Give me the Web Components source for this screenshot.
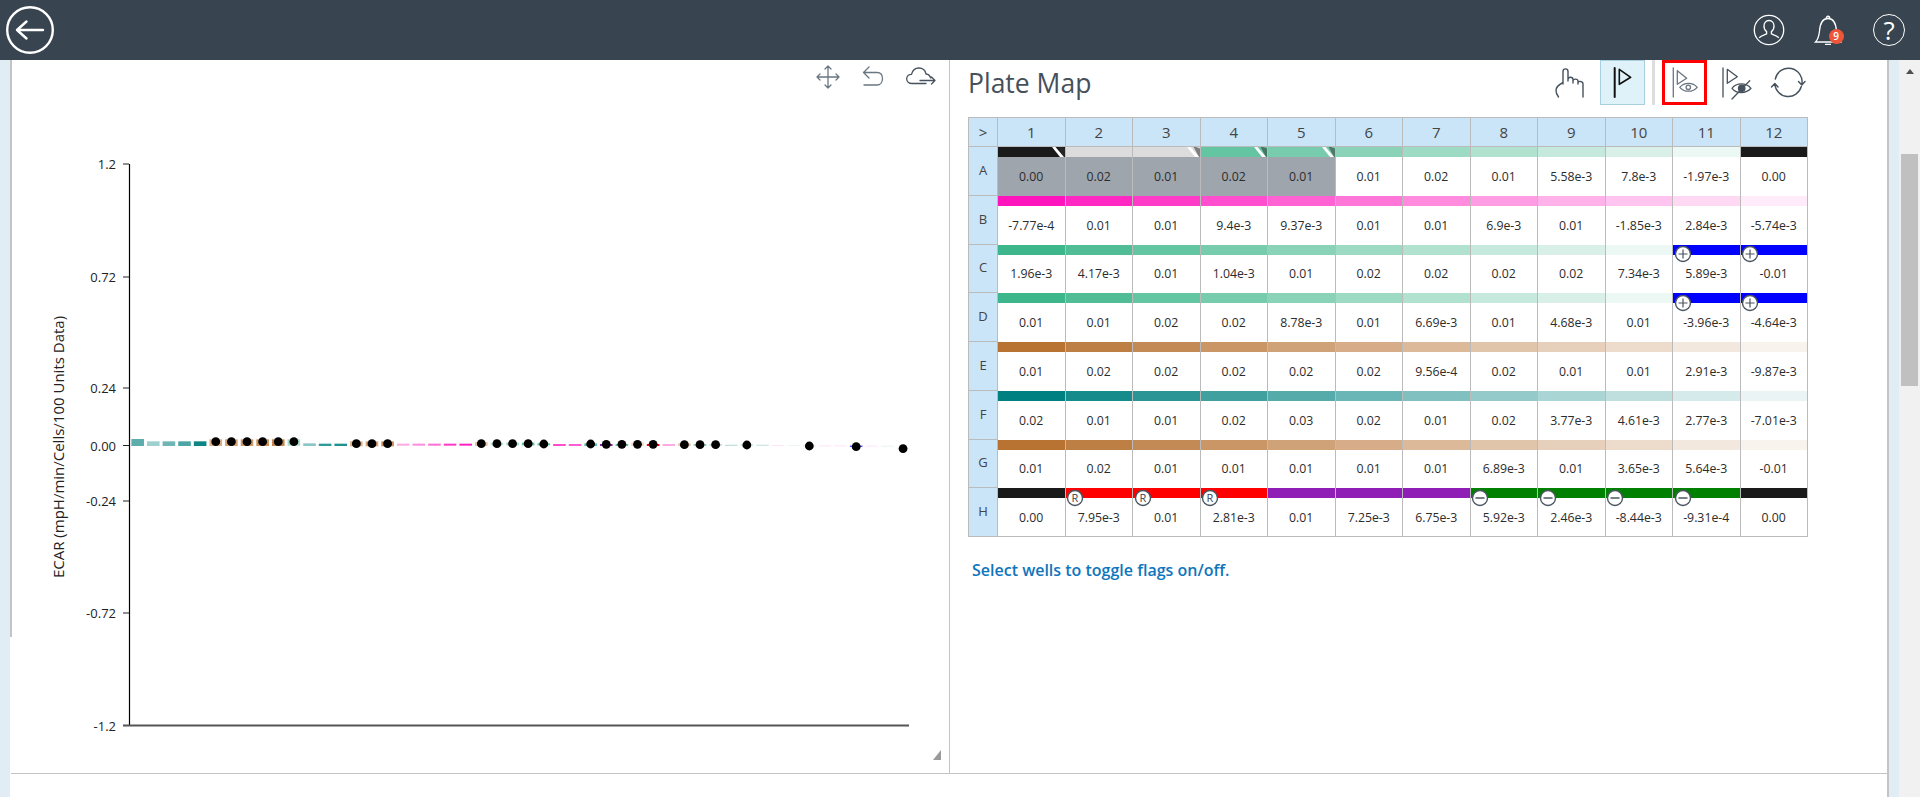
<!DOCTYPE html>
<html lang="en">
<head>
<meta charset="utf-8">
<title>Plate Map</title>
<style>
    html, body { margin: 0; height: 100%; overflow: hidden; background: #fff; }
    body { font-family: "Open Sans", "Liberation Sans", sans-serif; display: flex; flex-direction: column; }
</style>
</head>
<body>
<app-header></app-header>
<app-shell>
    <ecar-chart slot="left"></ecar-chart>
    <plate-panel slot="right"></plate-panel>
</app-shell>

<script>
// Barra superior com voltar, usuario, notificacoes e ajuda
class AppHeader extends HTMLElement {
    constructor() {
        super();
        this.attachShadow({ mode: 'open' });
        this.shadowRoot.innerHTML = `
            <style>
                :host { display: flex; flex: none; height: 60px; background: #38444f; align-items: center; justify-content: space-between; padding: 0 15px 0 6px; }
                .right { display: flex; align-items: center; gap: 27px; }
                svg { display: block; fill: none; stroke: #fff; }
                .bell { position: relative; width: 32px; height: 32px; margin-right: 2px; }
                .badge { position: absolute; left: 16.5px; top: 14.5px; width: 15px; height: 15px; border-radius: 50%; background: #f0553a; color: #fff; font-size: 10px; font-weight: 600; line-height: 15px; text-align: center; }
                .help { width: 32px; height: 32px; box-sizing: border-box; border: 1.3px solid #fff; border-radius: 50%; display: flex; align-items: center; justify-content: center; color: #fff; font-size: 26px; font-weight: 400; line-height: 1; }
            </style>
            <svg width="48" height="48" viewBox="0 0 48 48" stroke-width="2.4" stroke-linecap="round" stroke-linejoin="round">
                <circle cx="24" cy="24" r="22.8"/>
                <path d="M37 24H11M20.5 15.5L11 24L20.5 32.5"/>
            </svg>
            <div class="right">
                <svg width="32" height="32" viewBox="0 0 32 32" stroke-width="1.3">
                    <circle cx="16" cy="16" r="14.7"/>
                    <path d="M16 6.5c-3.2 0-5 2.6-5 5.5 0 2.4 1 4.5 2.6 5.6v2.3c-2.3 1-5.8 2-7.4 3.8M16 6.5c3.2 0 5 2.6 5 5.5 0 2.4-1 4.5-2.6 5.6v2.3c2.3 1 5.8 2 7.4 3.8"/>
                </svg>
                <div class="bell">
                    <svg width="32" height="32" viewBox="0 0 32 32" stroke-width="1.3">
                        <path d="M3.5 28C6.5 25 7 22 7.5 17 8 10 10.5 4.5 16 4.5S24 10 24.5 17C25 22 25.5 25 28.5 28ZM14.2 4.5C14.2 1.5 17.8 1.5 17.8 4.5M13 30.3H19"/>
                    </svg>
                    <span class="badge">9</span>
                </div>
                <div class="help">?</div>
            </div>
        `;
    }
}

// Area principal: faixas azuis, duas colunas e barra de rolagem
class AppShell extends HTMLElement {
    constructor() {
        super();
        this.attachShadow({ mode: 'open' });
        this.shadowRoot.innerHTML = `
            <style>
                :host { display: flex; flex: 1; min-height: 0; }
                .strip { background: #e1edf5; flex: none; width: 10px; }
                .edge { flex: none; width: 2px; height: 577px; background: #c4c4c4; margin-right: -1px; position: relative; }
                .page { flex: 1; min-width: 0; display: flex; flex-direction: column; border-right: 2px solid #c4c4c4; }
                .columns { display: flex; height: 713px; flex: none; border-bottom: 1px solid #c4c4c4; }
                .col-left { width: 939px; box-sizing: border-box; flex: none; border-right: 1px solid #c4c4c4; }
                .col-right { flex: 1; min-width: 0; }
                .scroll { flex: none; width: 21px; background: #f1f1f1; display: flex; flex-direction: column; align-items: center; }
                .arrow { width: 0; height: 0; margin-top: 9px; border: 4.5px solid transparent; border-top: 0; border-bottom: 5px solid #505050; }
                .thumb { width: 17px; height: 232px; background: #c0c0c0; margin-top: 80px; }
            </style>
            <div class="strip"></div>
            <div class="edge"></div>
            <div class="page">
                <div class="columns">
                    <div class="col-left"><slot name="left"></slot></div>
                    <div class="col-right"><slot name="right"></slot></div>
                </div>
            </div>
            <div class="strip"></div>
            <div class="scroll"><div class="arrow"></div><div class="thumb"></div></div>
        `;
    }
}

// Botao de 45px da barra de ferramentas, o icone vem pelo slot
class ToolButton extends HTMLElement {
    constructor() {
        super();
        this.attachShadow({ mode: 'open' });
        this.shadowRoot.innerHTML = `
            <style>
                :host { display: block; width: 45px; height: 45px; box-sizing: border-box; flex: none; position: relative; }
                :host([active]) { background: #e0f2f9; box-shadow: inset 0 0 0 1px #a8cfdf; }
                :host([marked])::after { content: ""; position: absolute; inset: 0; border: 3px solid #f00; }
                ::slotted(svg) { display: block; width: 45px; height: 45px; }
            </style>
            <slot></slot>
        `;
    }
}

// Grafico ECAR, desenhado em svg
class EcarChart extends HTMLElement {
    constructor() {
        super();
        this.attachShadow({ mode: 'open' });
        this.shadowRoot.innerHTML = `
            <style>
                :host { display: block; height: 713px; }
                .tools { display: flex; justify-content: flex-end; align-items: flex-start; height: 45px; }
                .tools svg { display: block; fill: none; stroke: #6a7680; stroke-width: 1.3; stroke-linecap: round; stroke-linejoin: round; }
                .move { margin: 5px 22px 0 0; }
                .undo { margin: 6px 22px 0 0; }
                .cloud { margin: 7px 13px 0 0; stroke: #46525d !important; }
                .plot { display: block; }
                text { font-family: "Open Sans", sans-serif; font-size: 13px; fill: #222; }
                .title { font-size: 15px; }
            </style>
            <div class="tools">
                <svg class="move" width="24" height="24" viewBox="0 0 24 24">
                    <path d="M12 1V23M1 12H23M9 4L12 1L15 4M9 20L12 23L15 20M4 9L1 12L4 15M20 9L23 12L20 15"/>
                </svg>
                <svg class="undo" width="22" height="20" viewBox="0 0 22 20">
                    <path d="M7 1L1.5 6.5L7 12M1.5 6.5H15C18.5 6.5 20.5 9 20.5 12.5S18.5 19 15 19H2"/>
                </svg>
                <svg class="cloud" width="30" height="18" viewBox="0 0 30 18">
                    <path d="M20 16.5H6C3 16.5 .7 14.5 .7 11.8 .7 9.2 2.8 7.3 5.5 7.3 6.5 3.5 9.3 1 12.8 1 16.5 1 19.3 3.5 20 7 22.5 7.3 24 8.7 24.8 11M14 13.5H29M25.5 10L29 13.5L25.5 17"/>
                </svg>
            </div>
            <svg class="plot" width="938" height="667" viewBox="11 105 938 667"></svg>
        `;
    }

    connectedCallback() {
        const svg = this.shadowRoot.querySelector('.plot');
        let out = '';
        // eixos e marcas
        out += '<line x1="129.5" y1="164" x2="129.5" y2="726" stroke="#000" stroke-width="1.2"/>';
        out += '<line x1="123" y1="725.5" x2="909" y2="725.5" stroke="#555" stroke-width="2"/>';
        const ticks = [['1.2', 164], ['0.72', 277], ['0.24', 388], ['0.00', 445.5], ['-0.24', 501], ['-0.72', 613], ['-1.2', 726]];
        ticks.forEach(([label, y]) => {
            if (label !== '-1.2') out += `<line x1="123" y1="${y}" x2="129" y2="${y}" stroke="#222"/>`;
            out += `<text x="116" y="${y + 5}" text-anchor="end">${label}</text>`;
        });
        out += '<text class="title" transform="translate(64 447) rotate(-90)" text-anchor="middle">ECAR (mpH/min/Cells/100 Units Data)</text>';
        // [cor, topo, base, ponto] medidos em zoom 3x
        const marks = [
            ['#5eadad', 57, 78], ['#9fd0d0', 64, 78], ['#70b6b6', 64, 78], ['#4da5a5', 64, 78], ['#0e8484', 64, 78],
            ['#dcae86', 58, 78, 65], ['#d6a476', 58, 78, 65], ['#d09a68', 58, 78, 65], ['#cb915b', 58, 78, 65], ['#c5864f', 58, 78, 65],
            ['#a4dcc8', 58, 77, 65], ['#8cc5c5', 70, 78], ['#2f9a9a', 71, 78], ['#1f9090', 71, 78],
            ['#e0b48e', 64, 79, 71], ['#d9a679', 64, 79, 71], ['#c98e5a', 64, 79, 71],
            ['#ffaae4', 71, 77], ['#ff8de0', 71, 77], ['#ff70d4', 71, 77], ['#ff38c8', 71, 77], ['#ff1fc0', 71, 77],
            ['#e9c6a4', 66, 78, 71], ['#bfe4d6', 68, 76, 71], ['#9edcc5', 68, 76, 71], ['#62c2a0', 68, 76, 71],
            ['#62c2a0', 70, 76, 72], ['#ff4dcb', 72, 78], ['#ff5dd0', 72, 78], ['#62c2a0', 70, 78, 72],
            ['#8e1eb5', 72, 78, 73], ['#62c2a0', 72, 78, 73], ['#f0d9c4', 68, 78, 73], ['#f00', 72, 78, 73],
            ['#ffaae4', 72, 78], ['#e9c6a4', 70, 78, 74], ['#8bd2b9', 72, 78, 74], ['#d8d8d8', 72, 78, 74],
            ['#c3e0e0', 74, 78], ['#d8ecec', 72, 78, 75], ['#cfe6e6', 74, 78], ['#ffe4f7', 75, 78], ['#edf5f3', 75, 78],
            ['#edf5f3', 74, 80, 78], ['#ffe4f7', 76, 79], ['#ffe4f7', 76, 79], ['#00f', 77, 80, 80],
            ['#ffe4f7', 77, 80], ['#e8f2f0', 77, 80], ['#e8f2f0', 83, 88, 86]
        ];
        marks.forEach(([color, top, bottom, dot], i) => {
            const x = 137.67 + i * 15.62;
            out += `<rect x="${x - 6.3}" y="${420 + top / 3}" width="12.6" height="${(bottom - top) / 3}" fill="${color}"/>`;
            if (dot !== undefined) out += `<circle cx="${x}" cy="${420 + dot / 3}" r="4.4" fill="#000"/>`;
        });
        // alca de redimensionar
        out += '<path d="M933 760L941 750V760Z" fill="#9a9a9a"/>';
        svg.innerHTML = out;
    }
}

// Um poco da placa: barra colorida, valor, marca opcional
class PlateWell extends HTMLElement {
    constructor() {
        super();
        this.attachShadow({ mode: 'open' });
        this.shadowRoot.innerHTML = `
            <style>
                :host { display: flex; flex-direction: column; position: relative; box-sizing: border-box; border-right: 1px solid #bbb; min-width: 0; }
                :host([selected]) .value { background: #9ea5ad; }
                .bar { height: 10px; flex: none; position: relative; overflow: hidden; }
                .value { flex: 1; display: flex; align-items: center; justify-content: center; font-size: 12.3px; color: #2c2c2c; }
                .flag { position: absolute; right: 0; top: 0; width: 14px; height: 10px; display: none; }
                :host([flagged]) .flag { display: block; }
                .badge { position: absolute; left: .7px; top: .7px; width: 18px; height: 18px; display: none; }
                text { font-family: "Open Sans", sans-serif; font-size: 11px; fill: #3c4650; }
            </style>
            <div class="bar">
                <svg class="flag" viewBox="0 0 14 10"><path d="M13 10H14V1.5L7 -1Z" fill="rgba(50,50,50,.55)"/><path d="M1 0H4.5L13 10H9Z" fill="#fff"/></svg>
            </div>
            <div class="value"><slot></slot></div>
            <svg class="badge" viewBox="0 0 18 18"></svg>
        `;
    }

    connectedCallback() {
        const root = this.shadowRoot;
        root.querySelector('.bar').style.background = this.getAttribute('color');
        const kind = this.getAttribute('badge');
        if (!kind) return;
        const badge = root.querySelector('.badge');
        let inner = '<circle cx="9" cy="9" r="7.5" fill="#fff" stroke="#4a5560" stroke-width="1.4"/>';
        if (kind === 'plus') inner += '<path d="M4.5 9H13.5M9 4.5V13.5" stroke="#4a5560" stroke-width="1.2"/>';
        if (kind === 'minus') inner += '<path d="M4.5 9H13.5" stroke="#4a5560" stroke-width="1.5"/>';
        if (kind === 'r') inner += '<text x="9" y="13" text-anchor="middle">R</text>';
        badge.innerHTML = inner;
        badge.style.display = 'block';
    }
}

// Cabecalhos da placa (linha e coluna)
class PlateHead extends HTMLElement {
    constructor() {
        super();
        this.attachShadow({ mode: 'open' });
        this.shadowRoot.innerHTML = `
            <style>
                :host { display: flex; align-items: center; justify-content: center; box-sizing: border-box; background: #cae5f8; border-right: 1px solid #bbb; border-bottom: 1px solid #bbb; color: #444; font-size: 15px; }
                :host([row]) { font-size: 13px; padding-bottom: 2px; }
            </style>
            <slot></slot>
        `;
    }
}

const GREEN = [60, 182, 138], PINK = [255, 20, 189], BROWN = [184, 115, 51], TEAL = [0, 128, 128];
function tint(base, alpha) {
    const c = base.map(v => Math.round(255 - (255 - v) * alpha));
    return `rgb(${c[0]},${c[1]},${c[2]})`;
}
const BLACK = '#1a1a1a';
const fade12 = base => Array.from({ length: 12 }, (_, i) => tint(base, (12 - i) / 12));
const fade10 = () => [...Array.from({ length: 10 }, (_, i) => tint(GREEN, (10 - i) / 10)), '#00f', '#00f'];
const PLATE = [
    { id: 'A', colors: [BLACK, '#dcdcdc', '#dcdcdc', ...Array.from({ length: 8 }, (_, i) => tint(GREEN, (8 - i) / 10)), BLACK],
      values: '0.00 0.02 0.01 0.02 0.01 0.01 0.02 0.01 5.58e-3 7.8e-3 -1.97e-3 0.00' },
    { id: 'B', colors: fade12(PINK), values: '-7.77e-4 0.01 0.01 9.4e-3 9.37e-3 0.01 0.01 6.9e-3 0.01 -1.85e-3 2.84e-3 -5.74e-3' },
    { id: 'C', colors: fade10(), values: '1.96e-3 4.17e-3 0.01 1.04e-3 0.01 0.02 0.02 0.02 0.02 7.34e-3 5.89e-3 -0.01' },
    { id: 'D', colors: fade10(), values: '0.01 0.01 0.02 0.02 8.78e-3 0.01 6.69e-3 0.01 4.68e-3 0.01 -3.96e-3 -4.64e-3' },
    { id: 'E', colors: fade12(BROWN), values: '0.01 0.02 0.02 0.02 0.02 0.02 9.56e-4 0.02 0.01 0.01 2.91e-3 -9.87e-3' },
    { id: 'F', colors: fade12(TEAL), values: '0.02 0.01 0.01 0.02 0.03 0.02 0.01 0.02 3.77e-3 4.61e-3 2.77e-3 -7.01e-3' },
    { id: 'G', colors: fade12(BROWN), values: '0.01 0.02 0.01 0.01 0.01 0.01 0.01 6.89e-3 0.01 3.65e-3 5.64e-3 -0.01' },
    { id: 'H', colors: [BLACK, '#f00', '#f00', '#f00', '#8e1eb5', '#8e1eb5', '#8e1eb5', '#008000', '#008000', '#008000', '#008000', BLACK],
      values: '0.00 7.95e-3 0.01 2.81e-3 0.01 7.25e-3 6.75e-3 5.92e-3 2.46e-3 -8.44e-3 -9.31e-4 0.00' }
];

function badgeFor(row, col) {
    if ((row === 'C' || row === 'D') && col >= 11) return 'plus';
    if (row === 'H' && col >= 2 && col <= 4) return 'r';
    if (row === 'H' && col >= 8 && col <= 11) return 'minus';
    return '';
}

// Painel direito: titulo, ferramentas, grade da placa e dica
class PlatePanel extends HTMLElement {
    constructor() {
        super();
        this.attachShadow({ mode: 'open' });
        this.shadowRoot.innerHTML = `
            <style>
                :host { display: block; padding: 0 76px 0 18px; }
                .top { display: flex; align-items: center; height: 45px; margin-bottom: 12px; }
                h2 { flex: 1; margin: 0; font-size: 26.5px; font-weight: 400; color: #46505a; }
                .tools { display: flex; gap: 7px; }
                .sep { width: 3px; background: #ddd; }
                svg { fill: none; stroke-linecap: round; stroke-linejoin: round; }
                .grid { display: grid; grid-template-columns: 29px repeat(12, 67.5px); grid-template-rows: 29px repeat(8, 48.75px); border-top: 1px solid #bbb; border-left: 1px solid #bbb; width: max-content; }
                plate-well.last { border-bottom: 1px solid #bbb; }
                p { margin: 22px 0 0 4px; font-size: 16px; font-weight: 600; color: #0f75bc; }
            </style>
            <div class="top">
                <h2>Plate Map</h2>
                <div class="tools">
                    <tool-button>
                        <svg viewBox="0 0 45 45" stroke="#46525d" stroke-width="1.4">
                            <path d="M15 24V11.5C15 8 20 8 20 11.5V21M20 19.5C20 16.5 25 16.5 25 19.5V23M25 21C25 18.5 30 18.5 30 21V24M30 23C30 20.5 35 21 35 24V37M15 22.5C11 24.5 8 27 8 30.5 8 33 9 35 10.5 37"/>
                        </svg>
                    </tool-button>
                    <tool-button active>
                        <svg viewBox="0 0 45 45" stroke="#111" stroke-width="1.6">
                            <path d="M14.7 8V37" stroke-width="2"/>
                            <path d="M19.3 9.3L30.7 17.3L19.3 24.3Z"/>
                        </svg>
                    </tool-button>
                    <div class="sep"></div>
                    <tool-button marked>
                        <svg viewBox="0 0 45 45" stroke="#6a7680" stroke-width="1.3">
                            <path d="M11.3 8V37"/>
                            <path d="M15.3 10.7L24.7 18.3L15.3 24.3Z"/>
                            <path d="M17.8 27.3C22 22 31 22 35.2 27.3 31 32.5 22 32.5 17.8 27.3Z"/>
                            <circle cx="26.3" cy="27.3" r="2.2"/>
                        </svg>
                    </tool-button>
                    <tool-button>
                        <svg viewBox="0 0 45 45" stroke="#46525d" stroke-width="1.3">
                            <path d="M9 8V37"/>
                            <path d="M13.3 9.3L23.3 16.7L13.3 23.3Z"/>
                            <path d="M18 28.3C22.5 22.5 32 22.5 37 28.3 32 34 22.5 34 18 28.3Z"/>
                            <circle cx="27.7" cy="28.3" r="3.2" fill="#46525d"/>
                            <path d="M18 39L35.7 20.7"/>
                        </svg>
                    </tool-button>
                    <tool-button>
                        <svg viewBox="0 0 45 45" stroke="#46525d" stroke-width="1.4">
                            <path d="M9.3 19A13.5 13.5 0 0 1 35.8 24.5M32.5 21.5L35.8 25L39 21.5"/>
                            <path d="M35.3 26.5A13.5 13.5 0 0 1 8.8 24M5.5 27L8.8 23.5L12 27"/>
                        </svg>
                    </tool-button>
                </div>
            </div>
            <div class="grid"></div>
            <p>Select wells to toggle flags on/off.</p>
        `;
    }

    connectedCallback() {
        const grid = this.shadowRoot.querySelector('.grid');
        const corner = document.createElement('plate-head');
        corner.textContent = '>';
        grid.append(corner);
        for (let c = 1; c <= 12; c++) {
            const head = document.createElement('plate-head');
            head.textContent = c;
            grid.append(head);
        }
        PLATE.forEach(row => {
            const head = document.createElement('plate-head');
            head.setAttribute('row', '');
            head.textContent = row.id;
            grid.append(head);
            row.values.split(' ').forEach((value, i) => {
                const well = document.createElement('plate-well');
                well.setAttribute('color', row.colors[i]);
                const badge = badgeFor(row.id, i + 1);
                if (badge) well.setAttribute('badge', badge);
                if (row.id === 'A' && i < 5) well.setAttribute('selected', '');
                if (row.id === 'A' && i < 5 && i !== 1) well.setAttribute('flagged', '');
                if (row.id === 'H') well.className = 'last';
                well.textContent = value;
                grid.append(well);
            });
        });
    }
}

customElements.define('app-header', AppHeader);
customElements.define('app-shell', AppShell);
customElements.define('tool-button', ToolButton);
customElements.define('ecar-chart', EcarChart);
customElements.define('plate-well', PlateWell);
customElements.define('plate-head', PlateHead);
customElements.define('plate-panel', PlatePanel);
</script>
</body>
</html>
